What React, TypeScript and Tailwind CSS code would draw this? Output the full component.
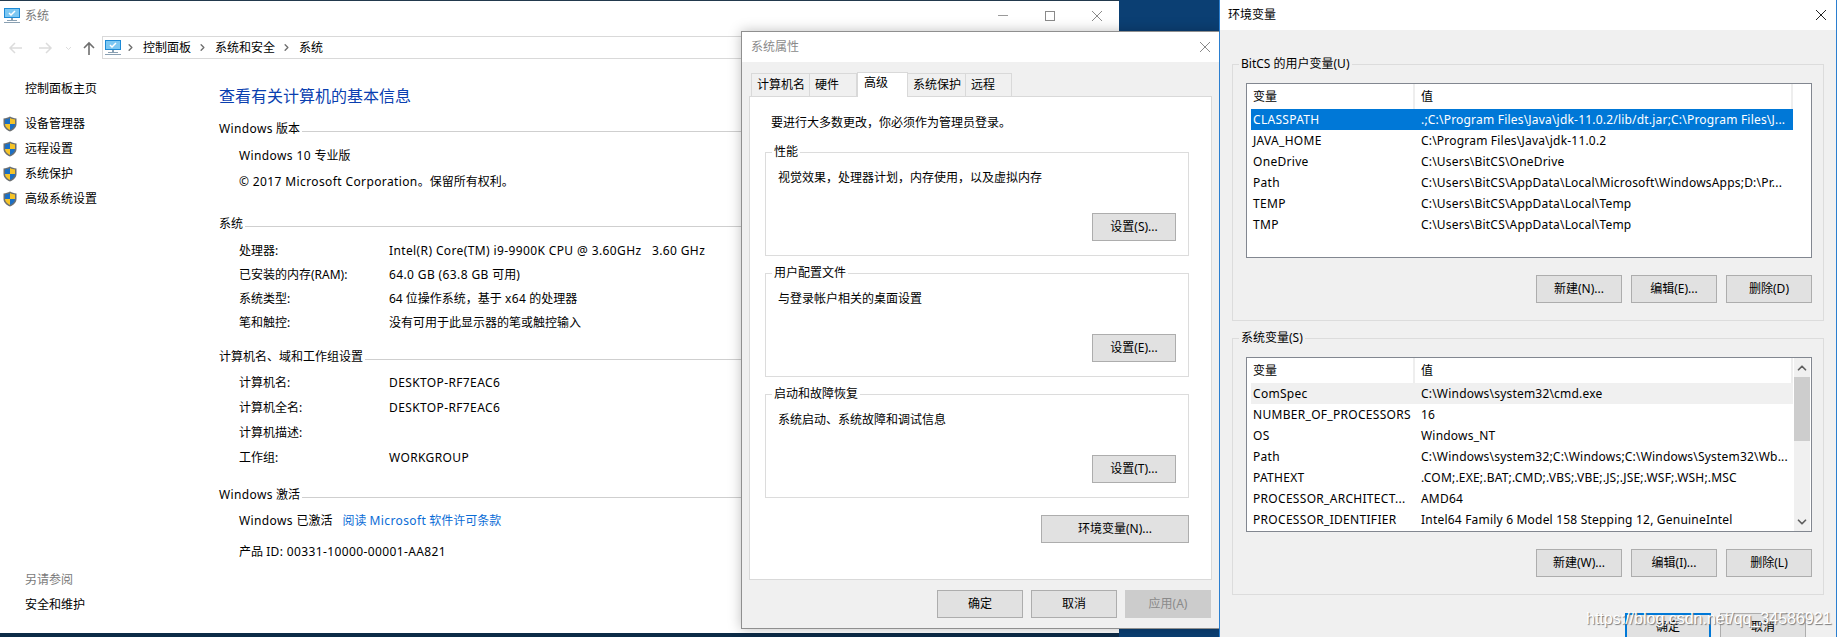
import type { ReactNode } from "react";
import { ChevronDown, ChevronRight, ChevronUp } from "lucide-react";

const font = "font-['Noto_Sans','Noto_Sans_CJK_SC',sans-serif]";

// Latin runs sit a little wider than Noto Sans at 12px, CJK runs do not
function Lat({ children }: { children: ReactNode }) {
  return <span className="tracking-[0.38px]">{children}</span>;
}

function Monitor() {
  return (
    <svg width="16" height="15" viewBox="0 0 16 15" className="shrink-0">
      <rect x="0" y="0" width="16" height="10" fill="#1c8ad6" />
      <rect x="1" y="1" width="14" height="8" fill="#7cc7f2" />
      <path d="M5 5l2 2 4-4" fill="none" stroke="#fff" strokeWidth="1.5" />
      <rect x="7" y="10" width="2" height="2" fill="#8aa0b2" />
      <rect x="3" y="12" width="10" height="1" fill="#8aa0b2" />
      <rect x="0" y="14" width="16" height="1" fill="#8aa0b2" />
    </svg>
  );
}

function Shield() {
  return (
    <svg width="14" height="16" viewBox="0 0 14 16" className="shrink-0">
      <path d="M7 0.5 C5 1.8 3 2.2 0.5 2.4 V8 C0.5 11.5 3.5 14.2 7 15.6 C10.5 14.2 13.5 11.5 13.5 8 V2.4 C11 2.2 9 1.8 7 0.5Z" fill="#6b6f72" />
      <path d="M7 2 C5.4 3 3.6 3.4 2 3.5 V8 H7Z" fill="#1b6fc4" />
      <path d="M7 2 C8.6 3 10.4 3.4 12 3.5 V8 H7Z" fill="#f6c428" />
      <path d="M2 8 H7 V14 C4.4 12.8 2 10.8 2 8Z" fill="#f6c428" />
      <path d="M12 8 H7 V14 C9.6 12.8 12 10.8 12 8Z" fill="#1b6fc4" />
    </svg>
  );
}

function CloseMark({ color }: { color: string }) {
  return (
    <svg width="10" height="10" viewBox="0 0 10 10">
      <path d="M0 0L10 10M10 0L0 10" stroke={color} strokeWidth="1" fill="none" />
    </svg>
  );
}

function SideLink({ label, shield }: { label: string; shield?: boolean }) {
  return (
    <div className="flex h-[25px] items-center">
      <div className="w-[25px] pl-[3px]">{shield && <Shield />}</div>
      <span>{label}</span>
    </div>
  );
}

function Section({ title, children, className }: { title: ReactNode; children: ReactNode; className: string }) {
  return (
    <div className={className}>
      <div className="flex h-[20px] items-center">
        <span className="shrink-0">{title}</span>
        <div className="ml-[2px] mt-[5px] h-px flex-1 bg-[#cfcfcf]" />
      </div>
      <div className="pl-[20px]">{children}</div>
    </div>
  );
}

function Spec({ label, value, rowClass }: { label: string; value?: ReactNode; rowClass: string }) {
  return (
    <div className={`flex items-center whitespace-pre ${rowClass}`}>
      <span className="w-[150px]">{label}</span>
      <span>{value}</span>
    </div>
  );
}

function WinButton({ label, className, disabled }: { label: string; className: string; disabled?: boolean }) {
  return (
    <div
      className={`flex h-[28px] items-center justify-center border text-[12px] ${
        disabled ? "border-[#cccccc] bg-[#cccccc] text-[#8a8a8a]" : "border-[#adadad] bg-[#e1e1e1] text-black"
      } ${className}`}
    >
      {label}
    </div>
  );
}

function GroupBox({
  title,
  note,
  button,
  className,
}: {
  title: string;
  note: string;
  button: string;
  className: string;
}) {
  return (
    <div className={`relative border border-[#dcdcdc] px-[12px] ${className}`}>
      <span className="absolute left-[6px] top-[-9px] bg-white px-[2px] leading-[16px]">{title}</span>
      <div className="pt-[16px] leading-[18px]">{note}</div>
      <div className="mt-[26px] flex justify-end">
        <WinButton label={button} className="w-[84px]" />
      </div>
    </div>
  );
}

function Tab({ label, className }: { label: string; className: string }) {
  return (
    <div className={`flex h-[23px] items-center border border-b-0 border-[#d9d9d9] bg-[#f0f0f0] pl-[5px] ${className}`}>
      {label}
    </div>
  );
}

type EnvVar = { name: string; value: string; selected?: boolean; dim?: boolean };

const userVars: EnvVar[] = [
  { name: "CLASSPATH", value: ".;C:\\Program Files\\Java\\jdk-11.0.2/lib/dt.jar;C:\\Program Files\\J...", selected: true },
  { name: "JAVA_HOME", value: "C:\\Program Files\\Java\\jdk-11.0.2" },
  { name: "OneDrive", value: "C:\\Users\\BitCS\\OneDrive" },
  { name: "Path", value: "C:\\Users\\BitCS\\AppData\\Local\\Microsoft\\WindowsApps;D:\\Pr..." },
  { name: "TEMP", value: "C:\\Users\\BitCS\\AppData\\Local\\Temp" },
  { name: "TMP", value: "C:\\Users\\BitCS\\AppData\\Local\\Temp" },
];

const systemVars: EnvVar[] = [
  { name: "ComSpec", value: "C:\\Windows\\system32\\cmd.exe", dim: true },
  { name: "NUMBER_OF_PROCESSORS", value: "16" },
  { name: "OS", value: "Windows_NT" },
  { name: "Path", value: "C:\\Windows\\system32;C:\\Windows;C:\\Windows\\System32\\Wb..." },
  { name: "PATHEXT", value: ".COM;.EXE;.BAT;.CMD;.VBS;.VBE;.JS;.JSE;.WSF;.WSH;.MSC" },
  { name: "PROCESSOR_ARCHITECT...", value: "AMD64" },
  { name: "PROCESSOR_IDENTIFIER", value: "Intel64 Family 6 Model 158 Stepping 12, GenuineIntel" },
];

function VarList({ rows, scroll, className }: { rows: EnvVar[]; scroll?: boolean; className: string }) {
  return (
    <div className={`flex border border-[#828790] bg-white ${className}`}>
      <div className="w-[546px] pl-[4px]">
        <div className="flex h-[25px] items-center">
          <div className="flex h-full w-[164px] items-center border-r-2 border-[#eeeeee] pl-[2px]">变量</div>
          <div className="flex h-full flex-1 items-center border-r-2 border-[#eeeeee] pl-[6px]">值</div>
        </div>
        {rows.map((row) => (
          <div
            key={row.name}
            className={`flex h-[21px] items-center whitespace-nowrap ${
              row.selected ? "bg-[#0078d7] text-white" : row.dim ? "bg-[#f0f0f0]" : ""
            }`}
          >
            <div className="w-[164px] overflow-hidden pl-[2px] tracking-[0.3px]">{row.name}</div>
            <div className="pl-[6px] tracking-[0.2px]">{row.value}</div>
          </div>
        ))}
      </div>
      {scroll && (
        <div className="ml-[1px] flex w-[16px] flex-col items-center bg-[#f0f0f0] pt-[1px]">
          <ChevronUp size={14} strokeWidth={3} className="my-[2px] text-[#606060]" />
          <div className="h-[64px] w-full bg-[#cdcdcd]" />
          <div className="flex-1" />
          <ChevronDown size={14} strokeWidth={3} className="my-[2px] text-[#606060]" />
        </div>
      )}
    </div>
  );
}

function VarGroup({
  title,
  rows,
  buttons,
  className,
  scroll,
}: {
  title: string;
  rows: EnvVar[];
  buttons: string[];
  className: string;
  scroll?: boolean;
}) {
  return (
    <div className={`relative border border-[#dcdcdc] pl-[13px] pr-[11px] ${className}`}>
      <span className="absolute left-[6px] top-[-9px] bg-[#f0f0f0] px-[2px] leading-[16px]">{title}</span>
      <VarList rows={rows} scroll={scroll} className="mt-[18px] h-[175px] overflow-hidden" />
      <div className="mt-[17px] flex justify-end gap-[9px]">
        {buttons.map((b) => (
          <WinButton key={b} label={b} className="w-[86px]" />
        ))}
      </div>
    </div>
  );
}

function SystemWindow() {
  const tall = "h-[25px]";
  const short = "h-[24px]";
  return (
    <div className="absolute left-0 top-px flex h-[632px] w-[1119px] flex-col bg-white">
      <div className="flex h-[29px] shrink-0 items-center pl-[4px] pr-[17px] text-[#7a7a7a]">
        <Monitor />
        <span className="ml-[5px]">系统</span>
        <div className="ml-auto flex items-center gap-[37px]">
          <div className="h-px w-[10px] bg-[#9a9a9a]" />
          <div className="h-[10px] w-[10px] border border-[#8a8a8a]" />
          <CloseMark color="#8a8a8a" />
        </div>
      </div>
      <div className="mt-[6px] flex h-[23px] shrink-0 items-center">
        <svg width="102" height="16" viewBox="0 0 102 16" className="shrink-0">
          <path d="M10 8h12M15 3l-5 5 5 5" fill="none" stroke="#dcdcdc" strokeWidth="1.5" />
          <path d="M39 8h12M46 3l5 5-5 5" fill="none" stroke="#dcdcdc" strokeWidth="1.5" />
          <path d="M66 7l2.5 2.5L71 7" fill="none" stroke="#dcdcdc" strokeWidth="1" />
          <path d="M89 15V3M84 8l5-5 5 5" fill="none" stroke="#6f6f6f" strokeWidth="1.6" />
        </svg>
        <div className="flex h-full flex-1 items-center border border-[#d9d9d9] pl-[2px]">
          <Monitor />
          <ChevronRight size={11} strokeWidth={3} className="ml-[4px] text-[#6f6f6f]" />
          <span className="ml-[7px]">控制面板</span>
          <ChevronRight size={11} strokeWidth={3} className="ml-[6px] text-[#6f6f6f]" />
          <span className="ml-[7px]">系统和安全</span>
          <ChevronRight size={11} strokeWidth={3} className="ml-[6px] text-[#6f6f6f]" />
          <span className="ml-[7px]">系统</span>
        </div>
      </div>
      <div className="flex flex-1">
        <div className="flex w-[219px] shrink-0 flex-col">
          <div className="mt-[17px]">
            <SideLink label="控制面板主页" />
          </div>
          <div className="mt-[10px]">
            <SideLink label="设备管理器" shield />
            <SideLink label="远程设置" shield />
            <SideLink label="系统保护" shield />
            <SideLink label="高级系统设置" shield />
          </div>
          <div className="mt-[356px] text-[#7a7a7a]">
            <SideLink label="另请参阅" />
          </div>
          <div>
            <SideLink label="安全和维护" />
          </div>
        </div>
        <div className="flex-1">
          <div className="mt-[25px] text-[16px] leading-[24px] text-[#0a3fb0]">查看有关计算机的基本信息</div>
          <Section title={<><Lat>Windows</Lat> 版本</>} className="mt-[11px]">
            <div className="mt-[4px] flex h-[26px] items-center whitespace-pre">
              <Lat>Windows 10 </Lat>专业版
            </div>
            <div className="flex h-[26px] items-center whitespace-pre">
              <Lat>© 2017 Microsoft Corporation</Lat>。保留所有权利。
            </div>
          </Section>
          <Section title="系统" className="mt-[19px]">
            <div className="mt-[5px]">
              <Spec rowClass={short} label="处理器:" value={<Lat>Intel(R) Core(TM) i9-9900K CPU @ 3.60GHz   3.60 GHz</Lat>} />
              <Spec rowClass={short} label="已安装的内存(RAM):" value={<><Lat>64.0 GB (63.8 GB </Lat>可用)</>} />
              <Spec rowClass={short} label="系统类型:" value={<>64 位操作系统，基于 <Lat>x64</Lat> 的处理器</>} />
              <Spec rowClass={short} label="笔和触控:" value="没有可用于此显示器的笔或触控输入" />
            </div>
          </Section>
          <Section title="计算机名、域和工作组设置" className="mt-[12px]">
            <div className="mt-[3px]">
              <Spec rowClass={tall} label="计算机名:" value={<Lat>DESKTOP-RF7EAC6</Lat>} />
              <Spec rowClass={tall} label="计算机全名:" value={<Lat>DESKTOP-RF7EAC6</Lat>} />
              <Spec rowClass={tall} label="计算机描述:" />
              <Spec rowClass={tall} label="工作组:" value={<Lat>WORKGROUP</Lat>} />
            </div>
          </Section>
          <Section title={<><Lat>Windows</Lat> 激活</>} className="mt-[15px]">
            <div className="mt-[3px] flex h-[26px] items-center whitespace-pre">
              <Lat>Windows </Lat>已激活
              <span className="ml-[10px] text-[#0a6cd6]">
                阅读 <Lat>Microsoft</Lat> 软件许可条款
              </span>
            </div>
            <div className="mt-[5px] flex h-[26px] items-center whitespace-pre">
              产品 <Lat>ID: 00331-10000-00001-AA821</Lat>
            </div>
          </Section>
        </div>
      </div>
    </div>
  );
}

function SystemProperties() {
  return (
    <div className="absolute left-[741px] top-[31px] flex h-[598px] w-[479px] flex-col border border-[#8f8f8f] bg-[#f0f0f0] shadow-[0_0_12px_rgba(0,0,0,0.25)]">
      <div className="flex h-[30px] shrink-0 items-center justify-between bg-white px-[9px] text-[#8a8a8a]">
        <span>系统属性</span>
        <CloseMark color="#8a8a8a" />
      </div>
      <div className="mt-[9px] flex h-[25px] items-end px-[9px]">
        <Tab label="计算机名" className="w-[59px]" />
        <Tab label="硬件" className="w-[47px] border-l-0" />
        <div className="relative z-10 mb-[-1px] flex h-[25px] w-[51px] items-start border border-b-0 border-[#d9d9d9] bg-white pl-[6px] pt-[1px]">
          高级
        </div>
        <Tab label="系统保护" className="w-[58px] border-l-0" />
        <Tab label="远程" className="w-[46px] border-l-0" />
      </div>
      <div className="mx-[7px] h-[484px] border border-[#d9d9d9] bg-white pl-[15px] pr-[22px]">
        <div className="ml-[6px] mt-[17px] leading-[18px]">要进行大多数更改，你必须作为管理员登录。</div>
        <GroupBox
          title="性能"
          note="视觉效果，处理器计划，内存使用，以及虚拟内存"
          button="设置(S)..."
          className="mt-[20px] h-[104px]"
        />
        <GroupBox
          title="用户配置文件"
          note="与登录帐户相关的桌面设置"
          button="设置(E)..."
          className="mt-[17px] h-[104px]"
        />
        <GroupBox
          title="启动和故障恢复"
          note="系统启动、系统故障和调试信息"
          button="设置(T)..."
          className="mt-[17px] h-[104px]"
        />
        <div className="mt-[17px] flex justify-end">
          <WinButton label="环境变量(N)..." className="w-[148px]" />
        </div>
      </div>
      <div className="mr-[8px] mt-[10px] flex justify-end gap-[8px]">
        <WinButton label="确定" className="w-[86px]" />
        <WinButton label="取消" className="w-[86px]" />
        <WinButton label="应用(A)" className="w-[86px]" disabled />
      </div>
    </div>
  );
}

function EnvWindow() {
  return (
    <div className="absolute left-[1219px] top-0 flex h-[637px] w-[618px] flex-col border-x border-[#2b7fd0] bg-[#f0f0f0]">
      <div className="flex h-[30px] shrink-0 items-center justify-between bg-white pl-[8px] pr-[10px]">
        <span>环境变量</span>
        <CloseMark color="#222222" />
      </div>
      <div className="mx-[12px] mt-[34px]">
        <VarGroup
          title="BitCS 的用户变量(U)"
          rows={userVars}
          buttons={["新建(N)...", "编辑(E)...", "删除(D)"]}
          className="h-[257px]"
        />
        <VarGroup
          title="系统变量(S)"
          rows={systemVars}
          buttons={["新建(W)...", "编辑(I)...", "删除(L)"]}
          className="mt-[17px] h-[257px]"
          scroll
        />
      </div>
      <div className="mt-[18px] flex justify-end gap-[9px] pr-[30px]">
        <div className="flex h-[28px] w-[86px] items-center justify-center border-2 border-[#0078d7] bg-[#e1e1e1]">确定</div>
        <WinButton label="取消" className="w-[86px]" />
      </div>
    </div>
  );
}

export default function App() {
  return (
    <div className={`relative h-[637px] w-[1837px] overflow-hidden bg-[#0b3f73] text-[12px] text-black ${font}`}>
      <div className="absolute bottom-0 left-0 h-[6px] w-[1119px] bg-[#0c2b47]" />
      <div className="absolute left-0 top-0 h-px w-[1119px] bg-[#22394d]" />
      <SystemWindow />
      <SystemProperties />
      <EnvWindow />
      <span className="absolute left-[1586px] top-[609px] font-['Liberation_Sans',sans-serif] text-[16px] leading-[20px] text-white [text-shadow:1px_1px_1px_#777777]">
        https://blog.csdn.net/qq_34586921
      </span>
    </div>
  );
}
